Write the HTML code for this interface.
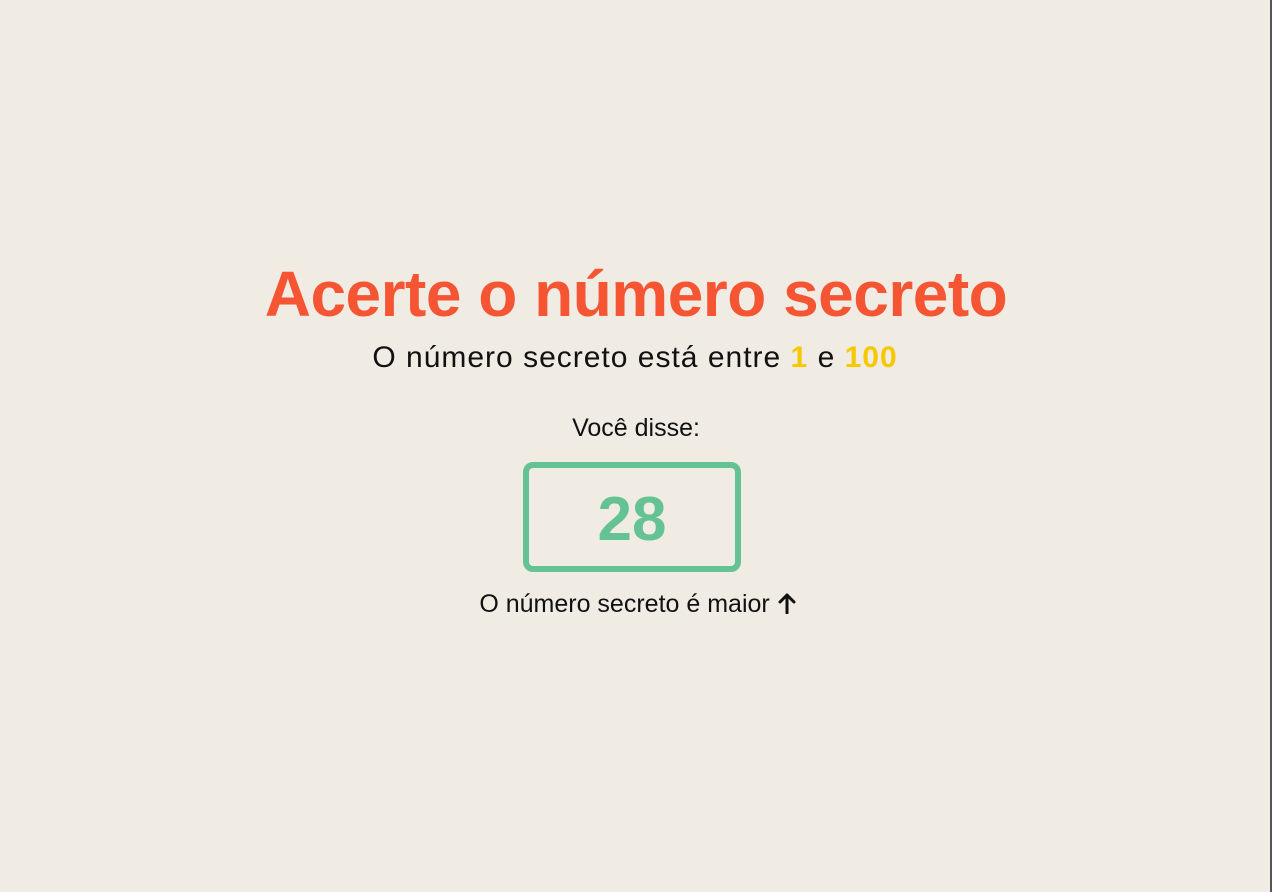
<!DOCTYPE html>
<html><head><meta charset="utf-8"><style>
html,body{margin:0;padding:0}
body{width:1272px;height:892px;background:#f0ebe3;position:relative;overflow:hidden;font-family:"Liberation Sans",sans-serif;color:#111}
.edge{position:absolute;right:0;top:0;width:2px;height:892px;background:#555}
.c{position:absolute;left:0;width:1272px;text-align:center;white-space:nowrap}
h1{margin:0;font-size:64px;font-weight:bold;color:#f55533;top:257px;letter-spacing:-0.5px;left:-6px}
.sub{top:341px;font-size:30px;letter-spacing:1px;left:-1px}
.y{color:#f5c800;font-weight:bold}
.vd{top:414px;font-size:25px}
.box{position:absolute;left:523px;top:462px;width:206px;height:98px;border:6px solid #65c294;border-radius:10px;box-sizing:content-box;text-align:center;line-height:104px;font-size:62px;font-weight:bold;color:#65c294}
.res{top:590px;font-size:25px;padding-left:2px}
.res svg{vertical-align:-2px}
</style></head><body>
<div class="edge"></div>
<h1 class="c">Acerte o número secreto</h1>
<div class="c sub">O número secreto está entre <span class="y">1</span> e <span class="y">100</span></div>
<div class="c vd">Você disse:</div>
<div class="box">28</div>
<div class="c res">O número secreto é maior <svg width="20" height="22" viewBox="0 0 20 22"><path d="M10 21V3M3 10l7-7 7 7" fill="none" stroke="#111" stroke-width="3" stroke-linecap="round" stroke-linejoin="round"/></svg></div>
</body></html>
